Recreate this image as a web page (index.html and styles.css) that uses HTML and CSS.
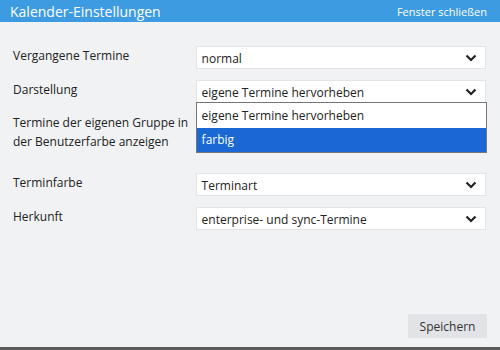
FILE: index.html
```html
<!DOCTYPE html>
<html lang="de">
<head>
  <meta charset="UTF-8">
  <title>Kalender-Einstellungen</title>
  <link rel="stylesheet" href="styles.css">
</head>
<body>
  <div class="dialog">
    <div class="titlebar">
      <span class="title">Kalender-Einstellungen</span>
      <a class="close" href="#">Fenster schließen</a>
    </div>

    <div class="content">
      <div class="row">
        <div class="label">Vergangene Termine</div>
        <div class="select">
          <span>normal</span>
          <svg class="chev" width="12" height="8" viewBox="0 0 12 8"><path d="M1.5 1.5 L6 6 L10.5 1.5" fill="none" stroke="#222" stroke-width="2.2"/></svg>
        </div>
      </div>

      <div class="row">
        <div class="label">Darstellung</div>
        <div class="select open">
          <span>eigene Termine hervorheben</span>
          <svg class="chev" width="12" height="8" viewBox="0 0 12 8"><path d="M1.5 1.5 L6 6 L10.5 1.5" fill="none" stroke="#222" stroke-width="2.2"/></svg>
          <ul class="menu">
            <li>eigene Termine hervorheben</li>
            <li class="active">farbig</li>
          </ul>
        </div>
      </div>

      <div class="row tall">
        <div class="label">Termine der eigenen Gruppe in der Benutzerfarbe anzeigen</div>
      </div>

      <div class="row">
        <div class="label">Terminfarbe</div>
        <div class="select">
          <span>Terminart</span>
          <svg class="chev" width="12" height="8" viewBox="0 0 12 8"><path d="M1.5 1.5 L6 6 L10.5 1.5" fill="none" stroke="#222" stroke-width="2.2"/></svg>
        </div>
      </div>

      <div class="row">
        <div class="label">Herkunft</div>
        <div class="select">
          <span>enterprise- und sync-Termine</span>
          <svg class="chev" width="12" height="8" viewBox="0 0 12 8"><path d="M1.5 1.5 L6 6 L10.5 1.5" fill="none" stroke="#222" stroke-width="2.2"/></svg>
        </div>
      </div>
    </div>

    <div class="footer">
      <button class="save">Speichern</button>
    </div>
  </div>
</body>
</html>
```

FILE: styles.css
```css
html, body {
  margin: 0;
  padding: 0;
}
body {
  font-family: "Open Sans", "DejaVu Sans", sans-serif;
  font-size: 12px;
  color: #222;
  background: #f0f2f4;
}
.dialog {
  width: 500px;
  height: 347px;
  border-bottom: 3px solid #5c5c5c;
  display: flex;
  flex-direction: column;
  background: #f0f2f4;
}
.titlebar {
  height: 22px;
  background: #3d9be1;
  display: flex;
  align-items: center;
  justify-content: space-between;
  padding: 0 13px 0 10px;
}
.title {
  color: #fff;
  font-size: 14px;
}
.close {
  color: #fff;
  font-size: 11px;
  text-decoration: none;
}
.content {
  padding: 24px 14px 0 13px;
  flex: 1;
}
.row {
  display: flex;
  margin-bottom: 11px;
}
.row.tall {
  margin-top: -1px;
  height: 40px;
  margin-bottom: 20px;
}
.label {
  width: 183px;
  line-height: 19px;
}
.select {
  position: relative;
  height: 21px;
  width: 276px;
  background: #fff;
  border: 1px solid #e2e4e7;
  display: flex;
  align-items: center;
  justify-content: space-between;
  padding: 0 8px 0 5px;
}
.select span {
  padding-top: 1px;
}
.chev {
  display: block;
}
.menu {
  position: absolute;
  left: -1px;
  top: 21px;
  width: 289px;
  margin: 0;
  padding: 0;
  list-style: none;
  background: #fff;
  border: 1px solid #767676;
  z-index: 2;
}
.menu li {
  height: 25px;
  line-height: 25px;
  padding-left: 5px;
}
.menu li.active {
  height: 24px;
  line-height: 24px;
  background: #1b67d3;
  color: #fff;
}
.footer {
  display: flex;
  justify-content: flex-end;
  padding: 0 13px 9px 0;
}
.save {
  font-family: inherit;
  font-size: 12px;
  color: #333;
  background: #e1e3e6;
  border: none;
  width: 79px;
  height: 24px;
  padding: 0;
}
```
